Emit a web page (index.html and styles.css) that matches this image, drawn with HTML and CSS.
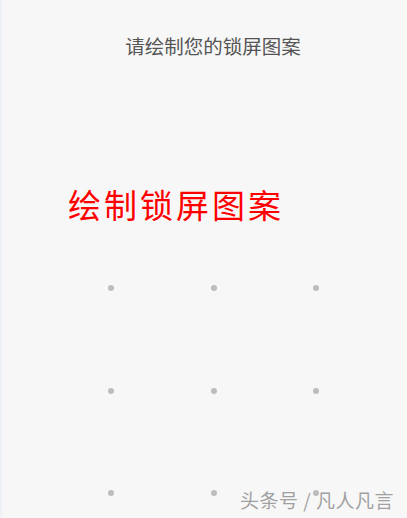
FILE: index.html
```html
<!DOCTYPE html>
<html lang="zh">
<head>
<meta charset="utf-8">
<link rel="stylesheet" href="styles.css">
</head>
<body>
<div class="screen">
  <div class="title">请绘制您的锁屏图案</div>
  <div class="caption">绘制锁屏图案</div>
  <div class="grid">
    <div class="cell"><span class="dot"></span></div>
    <div class="cell"><span class="dot"></span></div>
    <div class="cell"><span class="dot"></span></div>
    <div class="cell"><span class="dot"></span></div>
    <div class="cell"><span class="dot"></span></div>
    <div class="cell"><span class="dot"></span></div>
    <div class="cell"><span class="dot"></span></div>
    <div class="cell"><span class="dot"></span></div>
    <div class="cell"><span class="dot"></span></div>
  </div>
  <div class="watermark">头条号 / 凡人凡言</div>
</div>
</body>
</html>
```
FILE: styles.css
```css
html, body {
  margin: 0;
  padding: 0;
  background: #f7f7f7;
}
.screen {
  position: relative;
  width: 405px;
  height: 518px;
  overflow: hidden;
  border-left: 2px solid #eef1f6;
  background: #f7f7f7;
  font-family: "Noto Sans CJK SC", "Noto Sans", sans-serif;
}
.title {
  padding-top: 33px;
  height: 26px;
  line-height: 26px;
  font-size: 19.5px;
  color: #555555;
  text-align: center;
  margin-left: 17px;
}
.caption {
  margin-top: 125px;
  margin-left: 66px;
  height: 40px;
  line-height: 40px;
  font-size: 33px;
  letter-spacing: 3px;
  font-weight: 400;
  color: #ff0000;
}
.grid {
  margin-top: 13px;
  margin-left: 58px;
  display: grid;
  grid-template-columns: repeat(3, 102.5px);
  grid-auto-rows: 102.5px;
}
.cell {
  display: flex;
  align-items: center;
  justify-content: center;
}
.dot {
  width: 6px;
  height: 6px;
  border-radius: 50%;
  background: #bdbdbd;
}
.watermark {
  position: absolute;
  left: 238px;
  top: 487px;
  font-size: 19px;
  line-height: 26px;
  letter-spacing: 0.5px;
  color: #a0a0a0;
  text-shadow: 0 0 1px #ffffff;
  white-space: nowrap;
}
```
